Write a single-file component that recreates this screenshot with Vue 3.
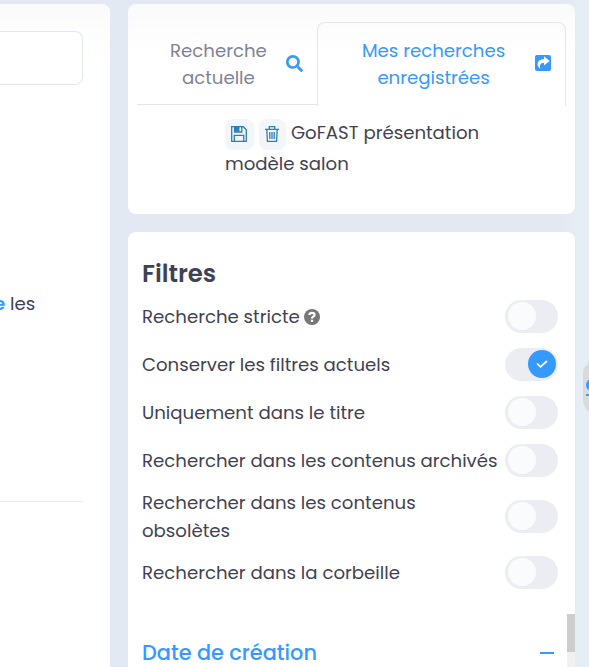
<script setup>
const filters = [
  { label: 'Recherche stricte', help: true, on: false },
  { label: 'Conserver les filtres actuels', on: true },
  { label: 'Uniquement dans le titre', on: false },
  { label: 'Rechercher dans les contenus archivés', on: false },
  { label: 'Rechercher dans les contenus obsolètes', on: false },
  { label: 'Rechercher dans la corbeille', on: false },
]
</script>

<template>
  <div class="page">
    <main class="results">
      <div class="search-box"></div>
      <p class="snippet"><b>e</b> les</p>
      <hr class="rule" />
    </main>
    <aside class="side">
      <section class="card saved">
        <nav class="tabs">
          <a class="tab">
            <span class="tab-label">Recherche<br />actuelle</span>
            <svg class="ico-search" viewBox="0 0 512 512"><path fill="currentColor" d="M505 442.700 405.300 343c-4.500-4.500-10.600-7-17-7H372c27.600-35.300 44-79.700 44-128C416 93.100 322.900 0 208 0S0 93.100 0 208s93.100 208 208 208c48.300 0 92.700-16.400 128-44v16.300c0 6.400 2.500 12.500 7 17l99.700 99.700c9.400 9.400 24.600 9.400 33.900 0l28.300-28.300c9.400-9.400 9.400-24.600.1-34zM208 336c-70.700 0-128-57.200-128-128 0-70.700 57.200-128 128-128 70.700 0 128 57.200 128 128 0 70.700-57.200 128-128 128z" /></svg>
          </a>
          <a class="tab active">
            <span class="tab-label">Mes recherches<br />enregistrées</span>
            <svg class="ico-share" viewBox="0 0 16 16"><rect width="16" height="16" rx="2" fill="currentColor" /><path fill="#fff" d="M9 1.300 14.600 5.900 9 10.500V7.900C5.500 7.800 4.300 9.600 5.300 13.700 1 10.800 1.500 4.200 9 3.900z" /></svg>
          </a>
        </nav>
        <div class="item">
          <button class="mini save">
            <svg viewBox="0 0 16 16" fill="none" stroke="currentColor" stroke-width="1.300"><path d="M.7.7h11.600l3 3v11.600H.7zM3.300 15V9.300h9.400V15" /><path d="M3.600 1v5h7.200V1" /><path fill="currentColor" stroke="none" d="M4 1h4.500v4.700H4z" /></svg>
          </button>
          <button class="mini trash">
            <svg viewBox="0 0 14 16" fill="none" stroke="currentColor" stroke-width="1.300"><path d="M0 3.400h14M4.300 3.200V.7h5.400v2.500M1.800 3.500l.6 11.800h9.200l.6-11.800M4.800 6v7M7 6v7M9.200 6v7" /></svg>
          </button>
          <span>GoFAST présentation</span><br /><span>modèle salon</span>
        </div>
      </section>
      <section class="card filters">
        <h2 class="title">Filtres</h2>
        <div v-for="f in filters" :key="f.label" class="row">
          <span class="row-label">{{ f.label }}<svg v-if="f.help" class="help" viewBox="0 0 16 16"><circle cx="8" cy="8" r="8" fill="#777" /><path d="M5.400 6C5.500 3.200 10.500 3 10.500 5.900 10.500 7.700 8 7.500 8 9.400" fill="none" stroke="#fff" stroke-width="2.300" /><path fill="#fff" d="M6.800 10.700h2.400v2.300H6.800z" /></svg></span>
          <span class="switch" :class="{ on: f.on }"><i class="knob"><svg v-if="f.on" viewBox="0 0 12 8"><path d="M1 3.500 4.500 6.800 11 1" fill="none" stroke="#fff" stroke-width="1.700" /></svg></i></span>
        </div>
        <div class="facet"><span class="facet-label">Date de création</span><i class="minus"></i></div>
      </section>
    </aside>
    <div class="scroll"></div>
    <div class="handle"><svg viewBox="0 0 20 24"><circle cx="8" cy="7" r="6" fill="#3699ff" /><path d="M2 17h14" stroke="#3699ff" stroke-width="2" /></svg></div>
  </div>
</template>

<style>
body { overflow: hidden; }
</style>
<style scoped>
* { box-sizing: border-box; }
.page {
  position: relative; display: flex; gap: 18px; width: 589px; height: 667px; padding-top: 4px; overflow: hidden;
  background: linear-gradient(90deg, #e3e9f2 560px, #e5edf5 580px); color: #3f4254; font: 18.15px/28px Poppins, Inter, sans-serif;
}
.results { width: 110px; height: 680px; padding-top: 27px; border-radius: 0 8px 0 0; background: linear-gradient(#fafafa, #fff 50px); }
.search-box { width: 83px; height: 54px; border: 1px solid #e4e6ef; border-left: 0; border-radius: 0 8px 8px 0; background: #fff; }
.snippet { margin: 205px 0 0 -6px; white-space: nowrap; }
.snippet b { color: #3699ff; font-weight: 600; }
.rule { width: 83px; height: 1px; margin: 183px 0 0; border: 0; background: #ebedf3; }
.side { display: flex; flex-direction: column; gap: 18px; width: 447px; }
.card { flex: none; border-radius: 8px; background: #fff; }
.saved { height: 210px; padding: 18px 9px 0; background: linear-gradient(#fafafa, #fff 50px); }
.tabs { display: flex; height: 83px; }
.tab { display: flex; align-items: center; width: 180px; padding: 2px 14px 0 33px; justify-content: space-between; border-bottom: 1px solid #e4e6ef; color: #7e8299; line-height: 27px; text-align: center; }
.tab.active { width: 249px; height: 84px; padding: 0 14px 2px 44px; border: 1px solid #e4e6ef; border-bottom: 0; border-radius: 8px 8px 0 0; color: #3699ff; }
.tab-label { white-space: nowrap; }
.ico-search { width: 17px; height: 17px; margin-top: -1px; color: #3699ff; }
.ico-share { width: 16px; height: 16px; margin-top: -1px; }
.item { padding: 12px 0 0 88px; line-height: 31px; white-space: nowrap; }
.mini { display: inline-flex; align-items: center; justify-content: center; height: 31px; padding: 0; margin: -2px 5px -2px 0; border: 0; border-radius: 8px; background: #f3f6f9; color: #2980b9; vertical-align: middle; }
.save { width: 29px; }
.trash { width: 27px; }
.save svg { width: 16px; height: 16px; margin-right: 1px; }
.trash svg { width: 14px; height: 16px; margin-right: 1px; }
.filters { height: 460px; padding: 26px 17px 0 14px; }
.title { height: 34.4px; margin: 0; font-size: 24.4px; line-height: 32px; font-weight: 600; }
.row { display: flex; align-items: center; justify-content: space-between; gap: 4px; min-height: 48px; padding: 4px 0; }
.row-label { max-width: 359px; margin: .6px 0 -.6px; }
.help { width: 16px; height: 16px; margin-left: 4px; vertical-align: -2px; }
.switch { display: flex; flex: none; align-items: center; width: 53px; height: 33.4px; padding: 0 3px; border-radius: 17px; background: #ebedf3; }
.knob { display: flex; align-items: center; justify-content: center; width: 28px; height: 28px; border-radius: 50%; background: #fafbfd; }
.switch.on { justify-content: flex-end; padding-right: 2px; }
.on .knob { background: #3699ff; }
.knob svg { width: 12px; height: 8px; }
.facet { display: flex; align-items: center; justify-content: space-between; margin-top: 41.6px; padding-right: 4px; color: #3699ff; font-size: 20.85px; font-weight: 500; line-height: 30px; }
.minus { width: 14px; height: 2px; background: #3699ff; }
.scroll { position: absolute; left: 567px; top: 614px; width: 8px; height: 53px; background: linear-gradient(#cdcdcd 38px, #f1f1f1 38px); }
.handle { position: absolute; left: 583px; top: 360px; width: 30px; height: 54px; padding: 18px 0 0 1px; border-radius: 14px; background: #dadada; }
.handle svg { display: block; width: 20px; height: 24px; }
</style>
